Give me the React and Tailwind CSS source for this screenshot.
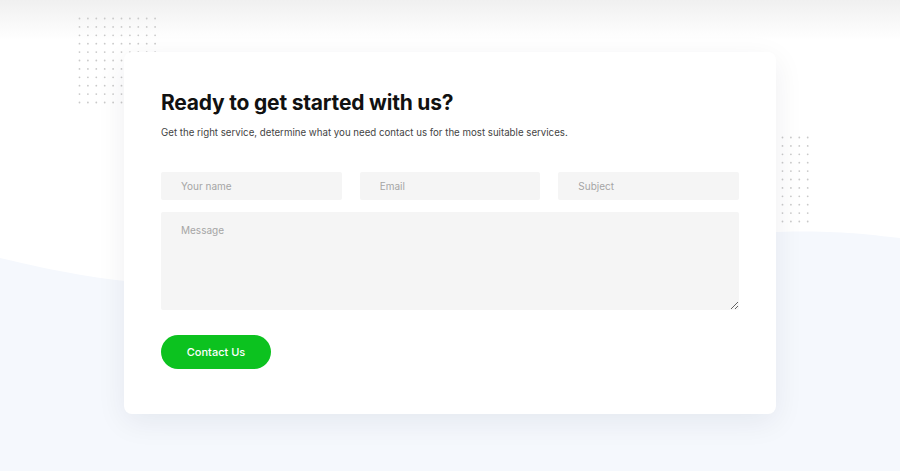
import React from 'react';

const font = { fontFamily: 'Inter, "Noto Sans", sans-serif' };

function Dots({ cols, rows, className }) {
  const gap = 8.4;
  return (
    <svg
      className={className}
      width={cols * gap}
      height={rows * gap}
      viewBox={`0 0 ${cols * gap} ${rows * gap}`}
    >
      {Array.from({ length: rows }).map((_, r) =>
        Array.from({ length: cols }).map((_, c) => (
          <circle key={`${r}-${c}`} cx={c * gap + 1.5} cy={r * gap + 1.5} r="0.9" fill="#c9c9c9" />
        ))
      )}
    </svg>
  );
}

export default function App() {
  return (
    <div className="relative w-full h-[471px] overflow-hidden bg-white" style={font}>
      {/* header shadow */}
      <div className="absolute top-0 left-0 right-0 h-[40px] bg-gradient-to-b from-[#f0f0f0] to-white" />

      {/* wave background */}
      <svg className="absolute inset-0" width="900" height="471" viewBox="0 0 900 471">
        <path
          d="M0 258 C60 272 100 280 160 284 C400 292 560 240 778 232 C840 230 870 235 900 238 L900 471 L0 471 Z"
          fill="#f5f8fd"
        />
      </svg>

      <Dots cols={10} rows={11} className="absolute left-[78px] top-[17px]" />
      <Dots cols={4} rows={11} className="absolute left-[781px] top-[136px]" />

      <div className="relative pt-[52px] flex justify-center">
        <div className="w-[652px] bg-white rounded-lg shadow-[0_8px_30px_rgba(20,30,60,0.07)] px-[37px] pt-[38px] pb-[45px]">
          <h2 className="text-[21px] leading-[26px] font-bold text-[#111] tracking-[-0.2px]">
            Ready to get started with us?
          </h2>
          <p className="mt-[10px] text-[9.7px] leading-[14px] text-[#444]">
            Get the right service, determine what you need contact us for the most suitable services.
          </p>

          <div className="mt-[32px] grid grid-cols-3 gap-[18px]">
            {['Your name', 'Email', 'Subject'].map((p) => (
              <input
                key={p}
                placeholder={p}
                className="h-[28px] bg-[#f5f5f5] rounded-[2px] px-[20px] text-[10px] text-[#333] placeholder:text-[#a5a5a5] outline-none"
              />
            ))}
          </div>

          <textarea
            placeholder="Message"
            className="mt-[12px] block w-full h-[98px] bg-[#f5f5f5] rounded-[2px] px-[20px] py-[11px] text-[10px] text-[#333] placeholder:text-[#a5a5a5] outline-none"
          />

          <button className="mt-[25px] w-[110px] h-[34px] rounded-full bg-[#0cc21f] text-white text-[11px] font-medium">
            Contact Us
          </button>
        </div>
      </div>
    </div>
  );
}
